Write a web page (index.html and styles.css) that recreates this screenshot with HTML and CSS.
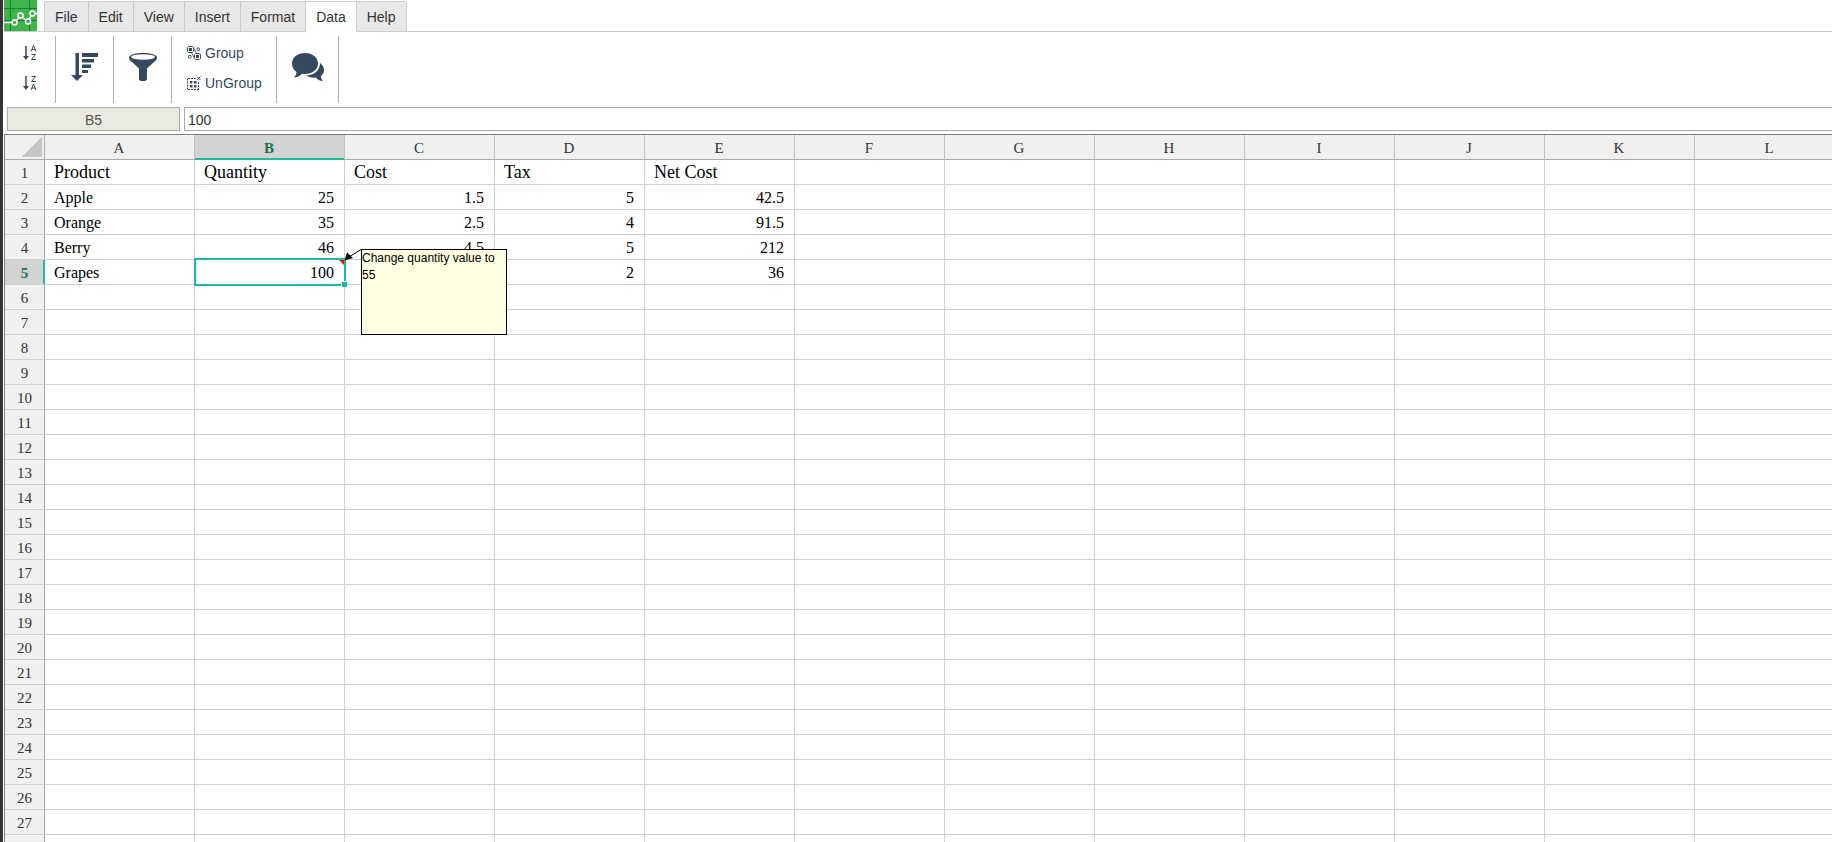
FILE: index.html
```html
<!DOCTYPE html>
<html lang="en">
<head>
    <meta charset="UTF-8">
    <meta name="viewport" content="width=device-width, initial-scale=1.0">
    <title>Spreadsheet</title>
    <link rel="stylesheet" href="styles.css">
</head>
<body>
    <div class="app">
        <nav class="tabs">
            <a class="logo" href="#" aria-label="Home">
                <svg width="33" height="31" viewBox="0 0 33 31">
                    <rect width="33" height="31" fill="#41b34b"/>
                    <path d="M6.5 0v31M0 8.500h33M0 20.500h33" stroke="#14803a" fill="none"/>
                    <path d="M25.500 0v10M25.500 25v6" stroke="#14803a" fill="none"/>
                    <path d="M0 22.500h8M12.500 20.500l2.500-3M18.500 17.500l4 3M25 19l2-3M31 13.500h2" stroke="#fff" stroke-width="1.500" fill="none"/>
                    <g fill="none" stroke="#fff" stroke-width="1.500">
                        <circle cx="10.500" cy="22.500" r="2.500"/>
                        <circle cx="16.500" cy="15.500" r="2.500"/>
                        <circle cx="24" cy="21.500" r="2.500"/>
                        <circle cx="28.500" cy="13.500" r="2.500"/>
                    </g>
                </svg>
            </a>
            <div class="tab-list">
                <button class="tab">File</button>
                <button class="tab">Edit</button>
                <button class="tab">View</button>
                <button class="tab">Insert</button>
                <button class="tab">Format</button>
                <button class="tab active">Data</button>
                <button class="tab">Help</button>
            </div>
        </nav>

        <div class="toolbar">
            <div class="tool-group sort-group">
                <button class="tool" aria-label="Sort A to Z">
                    <svg width="14" height="16" viewBox="0 0 14 16">
                        <path d="M3 1v11" stroke="#34495e" stroke-width="1.500" fill="none"/>
                        <path d="M0 11h6l-3 4z" fill="#34495e"/>
                        <path d="M8 6.500l2.500-6 2.500 6M9 4.500h3M8.500 9.500h4l-4 5h4.500" stroke="#34495e" fill="none"/>
                    </svg>
                </button>
                <button class="tool" aria-label="Sort Z to A">
                    <svg width="14" height="16" viewBox="0 0 14 16">
                        <path d="M3 1v11" stroke="#34495e" stroke-width="1.500" fill="none"/>
                        <path d="M0 11h6l-3 4z" fill="#34495e"/>
                        <path d="M8.500 1.500h4l-4 5h4.500M8 15l2.500-6 2.500 6M9 13h3" stroke="#34495e" fill="none"/>
                    </svg>
                </button>
            </div>
            <div class="tool-group">
                <button class="tool" aria-label="Sort">
                    <svg width="28" height="28" viewBox="0 0 28 28" fill="#34495e">
                        <path d="M4.500 0h3.500v22h4l-6 6-6-6h4.500z"/>
                        <path d="M11 0h16v4H11zM11 6h12v3.500H11zM11 11.500h9v3.500H11zM11 17h6v3H11z"/>
                    </svg>
                </button>
            </div>
            <div class="tool-group">
                <button class="tool" aria-label="Filter">
                    <svg width="28" height="28" viewBox="0 0 28 28">
                        <path d="M0 4.500C0 2 6 0 14 0s14 2 14 4.500c0 2-1 3-3 4.500l-7 6.500v10.500c0 3-8 3-8 0V15.500L3 9C1 7.500 0 6.500 0 4.500z" fill="#34495e"/>
                        <ellipse cx="14" cy="4" rx="12" ry="2.700" fill="#fff"/>
                    </svg>
                </button>
            </div>
            <div class="tool-group outline-group">
                <button class="tool">
                    <svg width="14" height="14" viewBox="0 0 14 14" fill="none" stroke="#34495e">
                        <path d="M1.500 .5h4l1 1v4l-1 1h-4l-1-1v-4zM8.500 7.500h4l1 1v4l-1 1h-4l-1-1v-4z"/>
                        <path d="M2 2h3v3H2zM9 9h3v3H9z" fill="#34495e" stroke="none"/>
                        <path d="M10 2h2.500v2.500H10zM1.500 9.500H4V12H1.500zM6.500 1.500l3 6M4.500 6.500l3 6" stroke-width=".8"/>
                    </svg>
                    Group
                </button>
                <button class="tool">
                    <svg width="14" height="14" viewBox="0 0 14 14" fill="none" stroke="#34495e">
                        <path d="M1 2.500h9M1 13.500h11.500M.5 2.500v11M11.500 6v7.500" stroke-dasharray="2 1"/>
                        <path d="M3 5h2.500v2.500H3zM7 5h2.500v2.500H7zM3 9h2.500v2.500H3zM7 9h2.500v2.500H7z" fill="#34495e" stroke="none"/>
                        <path d="M10 .5l3.500 3.500M13.500 .5l-3.500 3.500"/>
                    </svg>
                    UnGroup
                </button>
            </div>
            <div class="tool-group comment-group">
                <button class="tool" aria-label="Comments">
                    <svg width="32" height="28" viewBox="0 0 32 28" fill="#34495e">
                        <path d="M13 0c7.500 0 13 4.500 13 10.500S20.500 21 13 21l-3-.3C8 23 5 24.500 2 24.500c1.500-1.500 2.500-3.500 2.500-5.500C1.500 17 0 14 0 10.500 0 4.500 5.500 0 13 0z"/>
                        <path d="M28 10c3 2 4 5 4 7 0 2.500-1 4.500-3 6 0 2 .5 3.500 2 5-3 0-5.500-1.500-7-3.500-4 .5-7.500-.5-10-2 8 0 14-5 14-12.500z"/>
                    </svg>
                </button>
            </div>
        </div>

        <div class="formula-bar">
            <input class="name-box" type="text" value="B5" aria-label="Cell">
            <input class="formula" type="text" value="100" aria-label="Formula">
        </div>

        <div class="sheet">
            <table class="grid">
                <thead>
                    <tr id="columns">
                        <th class="corner"></th>
                    </tr>
                </thead>
                <tbody id="rows"></tbody>
            </table>
        </div>
    </div>

    <template id="commentTemplate">
        <span class="marker"></span>
        <span class="handle"></span>
        <svg class="arrow" width="18" height="12" viewBox="0 0 18 12">
            <path d="M17 .5L5 8" stroke="#000" fill="none"/>
            <path d="M.5 11.500l2.500-8 6 5.500z"/>
        </svg>
        <div class="comment">Change quantity value to 55</div>
    </template>

    <script src="script.js"></script>
</body>
</html>
```
FILE: styles.css
```css
* {
    box-sizing: border-box;
}
body {
    font-family: "Liberation Sans", Arial, sans-serif;
    margin: 0;
    background: #fff;
    overflow: hidden;
}
button {
    font-family: inherit;
    cursor: pointer;
}
.app {
    display: flex;
    flex-direction: column;
    height: 100vh;
    border-left: 3px solid #333;
    padding-left: 1px;
}

/* Tabs */
.tabs {
    display: flex;
    gap: 7px;
    height: 32px;
    flex-shrink: 0;
    border-bottom: 1px solid #ccc;
}
.logo svg {
    display: block;
}
.tab-list {
    display: flex;
    margin-top: 1px;
    height: 31px;
    border-left: 1px solid #ccc;
    border-top-left-radius: 3px;
}
.tab {
    font-size: 14px;
    color: #333;
    background: #e8e8e8;
    border: 1px solid #ccc;
    border-left: none;
    padding: 0 10px;
}
.tab:last-child {
    border-top-right-radius: 3px;
}
.tab.active {
    background: #fff;
    border-bottom-color: #fff;
}

/* Toolbar */
.toolbar {
    display: flex;
    height: 75px;
    flex-shrink: 0;
    padding: 4px 0;
}
.tool-group {
    display: flex;
    align-items: center;
    justify-content: center;
    width: 58px;
    padding-bottom: 6px;
    border-right: 1px solid #aeb2b7;
}
.tool {
    display: flex;
    align-items: center;
    gap: 4px;
    padding: 0;
    border: none;
    background: transparent;
    color: #34495e;
    font-size: 14px;
}
.sort-group {
    flex-direction: column;
    gap: 14px;
    width: 52px;
    padding-bottom: 3px;
}
.outline-group {
    flex-direction: column;
    align-items: flex-start;
    gap: 14px;
    width: 105px;
    padding-bottom: 3px;
    padding-left: 15px;
}
.comment-group {
    width: 62px;
}

/* Formula bar */
.formula-bar {
    display: flex;
    gap: 4px;
    padding-left: 3px;
    margin-bottom: 3px;
}
.formula-bar input {
    height: 24px;
    border: 1px solid #aaa;
    font-family: inherit;
    font-size: 14px;
    color: #333;
    padding: 1px 3px 0;
    outline: none;
}
.formula-bar .name-box {
    width: 173px;
    background: #eaeae0;
    color: #555;
    text-align: center;
}
.formula-bar .formula {
    flex: 1;
    border-right: none;
}

/* Sheet */
.sheet {
    flex: 1;
    overflow: hidden;
    border-top: 1px solid #808080;
    border-left: 1px solid #808080;
}
.grid {
    table-layout: fixed;
    width: max-content;
    border-collapse: separate;
    border-spacing: 0;
    font-family: "Liberation Serif", "Times New Roman", serif;
    font-size: 16px;
    color: #000;
}
.grid th,
.grid td {
    height: 25px;
    width: 150px;
    min-width: 150px;
    padding: 2px 10px 0 9px;
    line-height: 22px;
    border-right: 1px solid #d0d0d0;
    border-bottom: 1px solid #d0d0d0;
    white-space: nowrap;
    text-align: left;
}
.grid th {
    background: #f0f0f0;
    color: #333;
    font-size: 15px;
    font-weight: normal;
    text-align: center;
}
.grid thead th {
    border-color: #aaa;
    border-right-color: #c4c4c4;
}
.grid tbody th,
.grid .corner {
    width: 40px;
    min-width: 40px;
    padding: 2px 0 0;
    border-right-color: #aaa;
}
.grid .corner {
    background: linear-gradient(135deg, transparent 50%, #c6c6c6 50%) 17px 2px / 20px 20px no-repeat #f0f0f0;
}
.grid th.current {
    background: #d3d3d3;
    color: #217346;
    font-weight: bold;
}
.grid thead th.current {
    box-shadow: inset 0 -1px #1abc9c;
    border-bottom-color: #1abc9c;
}
.grid tbody th.current {
    box-shadow: inset -1px 0 #1abc9c;
    border-right-color: #1abc9c;
}
.grid .title {
    padding-top: 0;
    font-size: 18px;
    line-height: 24px;
}
.grid .number {
    text-align: right;
}
.selected {
    position: relative;
}
.selected::after {
    content: "";
    position: absolute;
    inset: -2px -2px -2px -1px;
    border: 2px solid #1abc9c;
}
.marker {
    position: absolute;
    top: 0;
    right: 0;
    border-top: 5px solid #f00;
    border-left: 5px solid transparent;
}
.handle {
    position: absolute;
    right: -3px;
    bottom: -3px;
    z-index: 1;
    width: 6px;
    height: 6px;
    background: #1abc9c;
    border: 1px solid #fff;
    border-right: none;
    border-bottom: none;
}
.arrow {
    position: absolute;
    left: 100%;
    top: -11px;
    z-index: 2;
}
.comment {
    position: absolute;
    left: calc(100% + 17px);
    top: -11px;
    z-index: 1;
    width: 146px;
    height: 86px;
    border: 1px solid #000;
    background: #ffffe1;
    font-family: "Liberation Sans", Arial, sans-serif;
    font-size: 12px;
    line-height: 17px;
    text-align: left;
    white-space: normal;
}
```
FILE: script.js
```js
const ROW_COUNT = 28;
const COLUMN_COUNT = 12;
const current = { row: 5, column: 'B' };

const data = [
    ['Product', 'Quantity', 'Cost', 'Tax', 'Net Cost'],
    ['Apple', 25, 1.5, 5, 42.5],
    ['Orange', 35, 2.5, 4, 91.5],
    ['Berry', 46, 4.5, 5, 212],
    ['Grapes', 100, '', 2, 36]
];

const columns = document.getElementById('columns');
const rows = document.getElementById('rows');

// Column letters
for (let c = 0; c < COLUMN_COUNT; c++) {
    const th = document.createElement('th');
    th.textContent = String.fromCharCode(65 + c);
    if (th.textContent === current.column) th.className = 'current';
    columns.appendChild(th);
}

// Rows with their numbers
for (let r = 1; r <= ROW_COUNT; r++) {
    const tr = document.createElement('tr');
    const th = document.createElement('th');
    th.textContent = r;
    if (r === current.row) th.className = 'current';
    tr.appendChild(th);

    for (let c = 0; c < COLUMN_COUNT; c++) {
        const td = document.createElement('td');
        const value = data[r - 1] ? data[r - 1][c] : undefined;
        if (value !== undefined) td.textContent = value;
        if (typeof value === 'number') td.classList.add('number');
        if (r === 1) td.classList.add('title');
        if (r === current.row && String.fromCharCode(65 + c) === current.column) {
            td.classList.add('selected');
            td.appendChild(document.getElementById('commentTemplate').content.cloneNode(true));
        }
        tr.appendChild(td);
    }
    rows.appendChild(tr);
}
```
